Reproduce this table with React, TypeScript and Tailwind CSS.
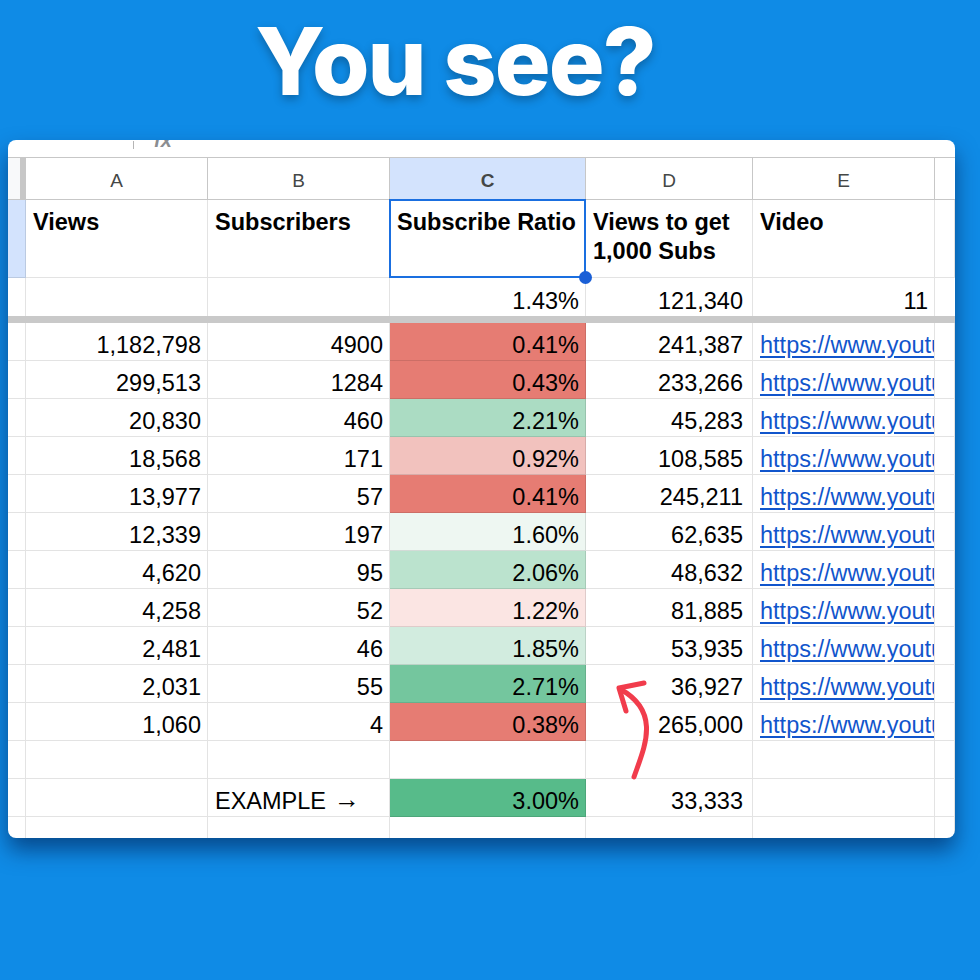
import React from "react";

type Row = { a: string; b: string; c: string; bg: string; d: string; link: boolean };

const rows: Row[] = [
    { a: "1,182,798", b: "4900", c: "0.41%", bg: "bg-[#e67c73]", d: "241,387", link: true },
    { a: "299,513", b: "1284", c: "0.43%", bg: "bg-[#e67c73]", d: "233,266", link: true },
    { a: "20,830", b: "460", c: "2.21%", bg: "bg-[#abdcc3]", d: "45,283", link: true },
    { a: "18,568", b: "171", c: "0.92%", bg: "bg-[#f2c2be]", d: "108,585", link: true },
    { a: "13,977", b: "57", c: "0.41%", bg: "bg-[#e67c73]", d: "245,211", link: true },
    { a: "12,339", b: "197", c: "1.60%", bg: "bg-[#eef7f2]", d: "62,635", link: true },
    { a: "4,620", b: "95", c: "2.06%", bg: "bg-[#bbe3ce]", d: "48,632", link: true },
    { a: "4,258", b: "52", c: "1.22%", bg: "bg-[#fbe5e3]", d: "81,885", link: true },
    { a: "2,481", b: "46", c: "1.85%", bg: "bg-[#d2ecdf]", d: "53,935", link: true },
    { a: "2,031", b: "55", c: "2.71%", bg: "bg-[#74c69e]", d: "36,927", link: true },
    { a: "1,060", b: "4", c: "0.38%", bg: "bg-[#e67c73]", d: "265,000", link: true },
];

const line = "border-r border-b border-black/[0.11]";
const num = `h-[38px] flex items-end justify-end pr-[6px] overflow-hidden whitespace-nowrap ${line}`;
const txt = `h-[38px] flex items-end pl-[7px] overflow-hidden whitespace-nowrap ${line}`;
const head = "h-[42px] flex items-center justify-center pt-[4px] text-[19px] text-[#444746] border-r border-b border-[#c7c7c7]";

function DataRow({ r }: { r: Row }) {
    return (
        <>
            <div className={`h-[38px] ${line}`} />
            <div className={num}>{r.a}</div>
            <div className={num}>{r.b}</div>
            <div className={`${num} ${r.bg}`}>{r.c}</div>
            <div className={`${num} pr-[9px]`}>{r.d}</div>
            <div className={txt}>
                {r.link && <span className="text-[#1155cc] underline underline-offset-[3px]">https://www.youtube.com/watch?v=</span>}
            </div>
            <div className={`h-[38px] ${line}`} />
        </>
    );
}

export default function App() {
    return (
        <div className="relative w-[980px] h-[980px] bg-[#0f8be6] overflow-hidden">
            <div className="h-[140px] flex justify-center pr-[70px]">
                <h1
                    className="mt-[15px] text-[93px] leading-[93px] font-extrabold text-white tracking-[-0.02em] [text-shadow:0_4px_10px_rgba(0,0,0,0.28)]"
                    style={{ fontFamily: "Inter, 'Noto Sans', sans-serif" }}
                >
                    You see?
                </h1>
            </div>

            <div
                className="ml-[8px] w-[947px] bg-white rounded-[8px] overflow-hidden shadow-[0_12px_22px_rgba(0,30,80,0.6)] text-[23.5px] leading-[29px] text-black"
                style={{ fontFamily: "'Liberation Sans', Arial, sans-serif" }}
            >
                {/* toolbar remnant */}
                <div className="h-[18px] border-b border-[#c7c7c7] flex items-start overflow-hidden">
                    <div className="ml-[125px] mt-[1px] w-px h-[8px] bg-[#b5b5b5]" />
                    <span className="ml-[20px] -mt-[14px] text-[20px] italic font-bold text-[#8a8d91]">fx</span>
                </div>

                <div className="grid grid-cols-[18px_182px_182px_196px_167px_182px_20px]">
                    {/* column letters */}
                    <div className="h-[42px] bg-[#f8f9fa] border-r-[6px] border-b border-[#c7c7c7]" />
                    <div className={head}>A</div>
                    <div className={head}>B</div>
                    <div className={`${head} bg-[#d3e3fd] font-bold text-[#1f1f1f]`}>C</div>
                    <div className={head}>D</div>
                    <div className={head}>E</div>
                    <div className="h-[42px] border-b border-[#c7c7c7]" />

                    {/* header row */}
                    <div className={`h-[78px] bg-[#d3e3fd] ${line}`} />
                    <div className={`h-[78px] pl-[7px] pt-[8px] font-bold ${line}`}>Views</div>
                    <div className={`h-[78px] pl-[7px] pt-[8px] font-bold ${line}`}>Subscribers</div>
                    <div className={`relative h-[78px] pl-[7px] pt-[8px] font-bold whitespace-nowrap ${line}`}>
                        Subscribe Ratio
                        <div className="absolute -left-px -top-px -right-px -bottom-px border-2 border-[#1a6fe0]" />
                        <div className="absolute -right-[7px] -bottom-[7px] w-[13px] h-[13px] rounded-full bg-[#1a5fd6]" />
                    </div>
                    <div className={`h-[78px] pl-[7px] pt-[8px] font-bold ${line}`}>Views to get 1,000 Subs</div>
                    <div className={`h-[78px] pl-[7px] pt-[8px] font-bold ${line}`}>Video</div>
                    <div className={`h-[78px] ${line}`} />

                    {/* totals row */}
                    <div className="h-[38px] border-r border-black/[0.11]" />
                    <div className="h-[38px] border-r border-black/[0.11]" />
                    <div className="h-[38px] border-r border-black/[0.11]" />
                    <div className="h-[38px] flex items-end justify-end pr-[6px] border-r border-black/[0.11]">1.43%</div>
                    <div className="h-[38px] flex items-end justify-end pr-[9px] border-r border-black/[0.11]">121,340</div>
                    <div className="h-[38px] flex items-end justify-end pr-[6px] border-r border-black/[0.11]">11</div>
                    <div className="h-[38px]" />

                    {/* freeze line */}
                    <div className="col-span-7 h-[7px] bg-[#c9c9c9]" />

                    {rows.map((r, i) => (
                        <DataRow key={i} r={r} />
                    ))}

                    {/* empty row */}
                    {Array.from({ length: 7 }).map((_, i) => (
                        <div key={`e${i}`} className={`h-[38px] ${line}`} />
                    ))}

                    {/* example row */}
                    <div className={`h-[38px] ${line}`} />
                    <div className={`h-[38px] ${line}`} />
                    <div className={txt}>
                        <span>
                            EXAMPLE<span className="ml-[8px] text-[26px] leading-[20px] relative -top-[1px]">→</span>
                        </span>
                    </div>
                    <div className={`${num} bg-[#57bb8a]`}>3.00%</div>
                    <div className={`${num} pr-[9px]`}>33,333</div>
                    <div className={`h-[38px] ${line}`} />
                    <div className={`h-[38px] ${line}`} />

                    {/* partial row */}
                    {Array.from({ length: 7 }).map((_, i) => (
                        <div key={`p${i}`} className="h-[21px] border-r border-black/[0.11]" />
                    ))}
                </div>
            </div>

            <svg className="absolute inset-0 pointer-events-none" width="980" height="980" viewBox="0 0 980 980">
                <path
                    d="M634 777 C644 748 662 712 620 689"
                    fill="none"
                    stroke="#f13c4c"
                    strokeWidth="5"
                    strokeLinecap="round"
                />
                <path
                    d="M644 683 L619 688 L626 711"
                    fill="none"
                    stroke="#f13c4c"
                    strokeWidth="5"
                    strokeLinecap="round"
                    strokeLinejoin="round"
                />
            </svg>
        </div>
    );
}
